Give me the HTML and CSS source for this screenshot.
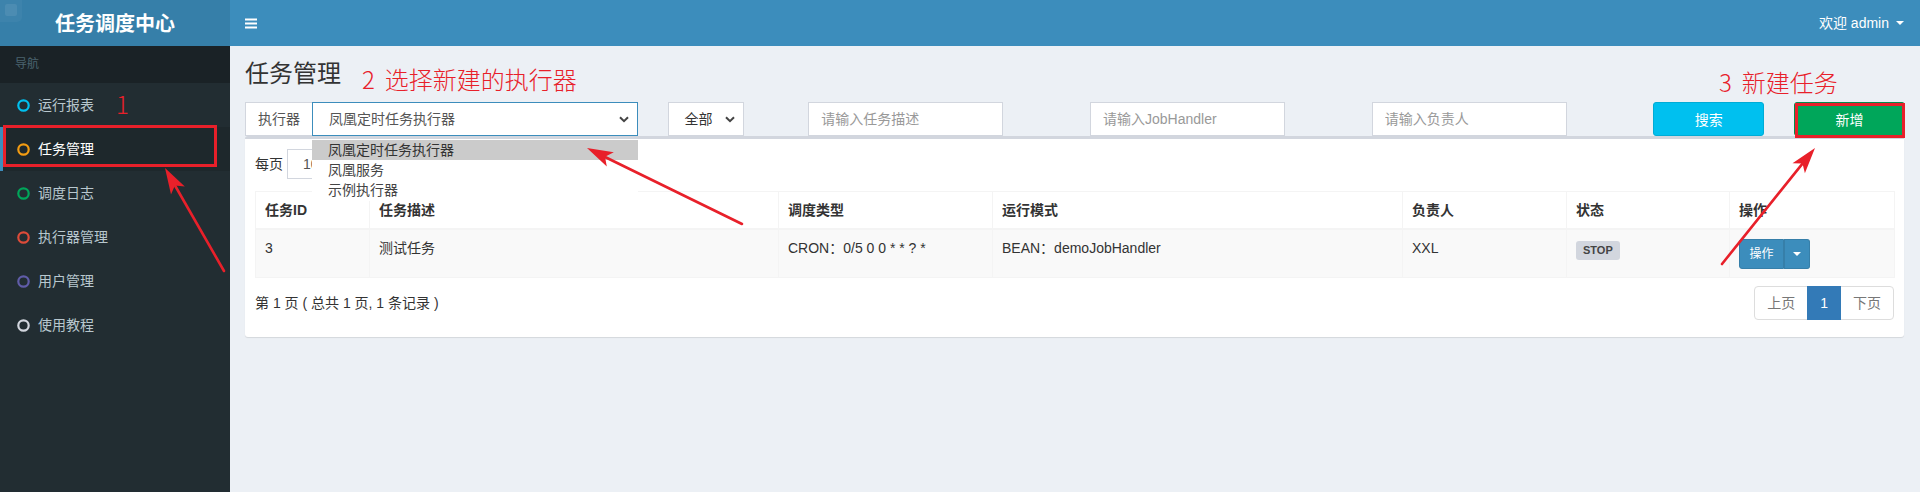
FILE: index.html
```html
<!DOCTYPE html>
<html lang="zh-CN">
<head>
<meta charset="utf-8">
<title>任务调度中心</title>
<link rel="stylesheet" href="styles.css">
</head>
<body>
<div class="app">
  <header class="topbar">
    <div class="logo">
      <span class="logo-mark"><span></span></span>
      <span class="logo-text">任务调度中心</span>
    </div>
    <nav class="navbar">
      <span class="toggle">
        <svg width="12" height="11" viewBox="0 0 12 11"><rect x="0" y="0.5" width="12" height="2" fill="#fff"/><rect x="0" y="4.5" width="12" height="2" fill="#fff"/><rect x="0" y="8.5" width="12" height="2" fill="#fff"/></svg>
      </span>
      <span class="user">欢迎 admin<span class="caret"></span></span>
    </nav>
  </header>
  <div class="main-wrap">
    <aside class="sidebar">
      <div class="nav-header">导航</div>
      <ul class="menu">
        <li><a><svg class="ico" viewBox="0 0 13 13"><circle cx="6.5" cy="6.5" r="5.2" stroke="#00c0ef"/></svg><span>运行报表</span></a></li>
        <li class="active"><a><svg class="ico" viewBox="0 0 13 13"><circle cx="6.5" cy="6.5" r="5.2" stroke="#f39c12"/></svg><span>任务管理</span></a></li>
        <li><a><svg class="ico" viewBox="0 0 13 13"><circle cx="6.5" cy="6.5" r="5.2" stroke="#00a65a"/></svg><span>调度日志</span></a></li>
        <li><a><svg class="ico" viewBox="0 0 13 13"><circle cx="6.5" cy="6.5" r="5.2" stroke="#dd4b39"/></svg><span>执行器管理</span></a></li>
        <li><a><svg class="ico" viewBox="0 0 13 13"><circle cx="6.5" cy="6.5" r="5.2" stroke="#605ca8"/></svg><span>用户管理</span></a></li>
        <li><a><svg class="ico" viewBox="0 0 13 13"><circle cx="6.5" cy="6.5" r="5.2" stroke="#d2d6de"/></svg><span>使用教程</span></a></li>
      </ul>
    </aside>
    <main class="content">
      <h1 class="page-title">任务管理</h1>
      <div class="filters">
        <div class="col col-3">
          <div class="input-group">
            <span class="addon">执行器</span>
            <div class="select select-focus">
              <span>凤凰定时任务执行器</span>
              <svg class="chev" width="10" height="7" viewBox="0 0 10 7"><path d="M1 1.2 L5 5.2 L9 1.2" fill="none" stroke="#444" stroke-width="2"/></svg>
            </div>
            <ul class="dropdown">
              <li class="hl">凤凰定时任务执行器</li>
              <li>凤凰服务</li>
              <li>示例执行器</li>
            </ul>
          </div>
        </div>
        <div class="col col-1">
          <div class="select select-small">
            <span>全部</span>
            <svg class="chev" width="10" height="7" viewBox="0 0 10 7"><path d="M1 1.2 L5 5.2 L9 1.2" fill="none" stroke="#444" stroke-width="2"/></svg>
          </div>
        </div>
        <div class="col col-2"><input class="text-input" type="text" placeholder="请输入任务描述"></div>
        <div class="col col-2"><input class="text-input" type="text" placeholder="请输入JobHandler"></div>
        <div class="col col-2"><input class="text-input" type="text" placeholder="请输入负责人"></div>
        <div class="col col-1"><button class="btn btn-search" type="button">搜索</button></div>
        <div class="col col-1"><button class="btn btn-add" type="button">新增</button></div>
      </div>
      <section class="box">
        <div class="length">
          <span>每页</span>
          <div class="select select-len"><span>10</span></div>
        </div>
        <table class="grid">
          <colgroup>
            <col class="c1"><col class="c2"><col class="c3"><col class="c4"><col class="c5"><col class="c6"><col class="c7">
          </colgroup>
          <thead>
            <tr><th>任务ID</th><th>任务描述</th><th>调度类型</th><th>运行模式</th><th>负责人</th><th>状态</th><th>操作</th></tr>
          </thead>
          <tbody>
            <tr>
              <td>3</td>
              <td>测试任务</td>
              <td>CRON：0/5 0 0 * * ? *</td>
              <td>BEAN：demoJobHandler</td>
              <td>XXL</td>
              <td><span class="label">STOP</span></td>
              <td>
                <span class="btn-group">
                  <span class="bg-main">操作</span><span class="bg-caret"><span class="caret-sm"></span></span>
                </span>
              </td>
            </tr>
          </tbody>
        </table>
        <div class="table-footer">
          <span class="info">第 1 页 ( 总共 1 页, 1 条记录 )</span>
          <ul class="pagination">
            <li class="disabled">上页</li>
            <li class="current">1</li>
            <li class="disabled">下页</li>
          </ul>
        </div>
      </section>
    </main>
  </div>

  <svg class="annotations" width="1920" height="492" viewBox="0 0 1920 492">
    <g fill="none" stroke="#e8202a" stroke-width="3">
      <rect x="4.5" y="126.5" width="211" height="39"/>
      <rect x="1796.5" y="104.5" width="107" height="32"/>
    </g>
    <g stroke="#e8202a" stroke-linecap="round">
      <line x1="224" y1="271" x2="175" y2="185.5" stroke-width="2.6"/>
      <line x1="742" y1="224" x2="605" y2="157" stroke-width="2.6"/>
      <line x1="1722" y1="264" x2="1802.5" y2="163.6" stroke-width="2.6"/>
    </g>
    <g fill="#e8202a">
      <polygon points="165,168 184.8,186.6 174.9,185.4 171,194.6"/>
      <polygon points="587,148 613.8,152.2 605,156.8 606.8,166.6"/>
      <polygon points="1815,148 1804.9,173.3 1802.5,163.6 1792.5,163.3"/>
    </g>
  </svg>
  <div class="note note-1">1</div>
  <div class="note note-2"><span class="num">2</span>选择新建的执行器</div>
  <div class="note note-3"><span class="num">3</span>新建任务</div>
</div>
</body>
</html>
```

FILE: styles.css
```css
* { box-sizing: border-box; }

html, body {
  margin: 0;
  padding: 0;
}

body {
  width: 1920px;
  height: 492px;
  overflow: hidden;
  font-family: "Liberation Sans", "Noto Sans CJK SC", sans-serif;
  font-size: 14px;
  line-height: 20px;
  color: #333;
  background: #ecf0f5;
}

ul { list-style: none; margin: 0; padding: 0; }

.app {
  position: relative;
  height: 492px;
  display: flex;
  flex-direction: column;
}

/* ---------- top bar ---------- */
.topbar {
  display: flex;
  height: 46px;
  flex: none;
}

.logo {
  position: relative;
  width: 230px;
  flex: none;
  background: #367fa9;
  color: #fff;
  display: flex;
  align-items: center;
  justify-content: center;
  font-family: "Noto Sans CJK SC", sans-serif;
  font-weight: 700;
  font-size: 20px;
  line-height: 24px;
}

.logo-mark {
  position: absolute;
  left: 0;
  top: 0;
  width: 22px;
  height: 22px;
  border-radius: 0 0 5px 0;
  background: rgba(255, 255, 255, 0.035);
}

.logo-mark span {
  position: absolute;
  left: 5px;
  top: 4px;
  width: 12px;
  height: 12px;
  border-radius: 2px;
  background: rgba(255, 255, 255, 0.08);
}

.navbar {
  flex: 1;
  background: #3c8dbc;
  display: flex;
  align-items: center;
  justify-content: space-between;
  padding: 0 16px 0 15px;
  color: #fff;
}

.toggle {
  display: flex;
  align-items: center;
  height: 12px;
}

.user {
  display: flex;
  align-items: center;
  font-size: 14px;
}

.caret {
  display: inline-block;
  width: 0;
  height: 0;
  margin-left: 7px;
  border-top: 4px solid #fff;
  border-left: 4px solid transparent;
  border-right: 4px solid transparent;
}

/* ---------- layout ---------- */
.main-wrap {
  flex: 1;
  display: flex;
  min-height: 0;
}

.sidebar {
  width: 230px;
  flex: none;
  background: #222d32;
}

.nav-header {
  background: #1a2226;
  color: #4b646f;
  font-size: 12px;
  line-height: 17px;
  padding: 10px 15px;
}

.menu li a {
  display: flex;
  align-items: center;
  padding: 12px 5px 12px 15px;
  color: #b8c7ce;
  font-size: 14px;
  line-height: 20px;
}

.menu li.active {
  background: #1e282c;
}

.menu li.active a {
  color: #fff;
  border-left: 3px solid #3c8dbc;
  padding-left: 12px;
}

.ico {
  width: 13px;
  height: 13px;
  margin-left: 2px;
  margin-right: 8px;
  fill: none;
  stroke-width: 2.2;
  flex: none;
}

.content {
  flex: 1;
  padding: 15px;
  min-width: 0;
}

.page-title {
  margin: 0;
  font-size: 24px;
  line-height: 26px;
  font-weight: 400;
  color: #333;
}

/* ---------- filters ---------- */
.filters {
  display: flex;
  margin: 15px -15px 0;
  height: 34px;
}

.col {
  padding: 0 15px;
  flex: none;
}

.col-1 { width: 8.3333%; }
.col-2 { width: 16.6667%; }
.col-3 { width: 25%; }

.input-group {
  position: relative;
  display: flex;
  height: 34px;
}

.addon {
  flex: none;
  padding: 6px 12px;
  border: 1px solid #d2d6de;
  border-right: 0;
  background: #fff;
  color: #555;
  line-height: 20px;
}

.select {
  display: flex;
  align-items: center;
  justify-content: space-between;
  height: 34px;
  border: 1px solid #d2d6de;
  background: #fff;
  color: #555;
  padding: 6px 8px 6px 16px;
}

.select-focus {
  flex: 1;
  border-color: #3c8dbc;
}

.select-small {
  width: 76px;
  color: #333;
}

.chev { flex: none; }

.dropdown {
  position: absolute;
  left: 67px;
  right: 0;
  top: 38px;
  background: #fff;
  color: #444;
  z-index: 5;
}

.dropdown li {
  height: 20px;
  line-height: 20px;
  padding-left: 16px;
}

.dropdown li:last-child { height: 21px; }

.dropdown li.hl {
  background: #cbcbcb;
  color: #333;
}

.text-input {
  width: 195px;
  height: 34px;
  border: 1px solid #d2d6de;
  padding: 6px 12px;
  font-family: inherit;
  font-size: 14px;
  color: #555;
  background: #fff;
  outline: none;
  border-radius: 0;
}

.text-input::placeholder { color: #999; }

.btn {
  display: block;
  width: 100%;
  height: 34px;
  border-radius: 3px;
  font-family: inherit;
  font-size: 14px;
  color: #fff;
  padding: 6px 12px;
  cursor: pointer;
}

.btn-search {
  background: #00c0ef;
  border: 1px solid #00acd6;
}

.btn-add {
  background: #00a65a;
  border: 1px solid #008d4c;
}

/* ---------- box ---------- */
.box {
  background: #fff;
  border-top: 3px solid #d2d6de;
  border-radius: 3px;
  box-shadow: 0 1px 1px rgba(0, 0, 0, 0.1);
  padding: 10px;
  width: 1659px;
}

.length {
  display: flex;
  align-items: center;
  height: 30px;
}

.select-len {
  width: 75px;
  height: 30px;
  margin-left: 4px;
  padding: 4px 15px;
  color: #555;
}

.grid {
  width: 1639px;
  margin-top: 12px;
  border-collapse: collapse;
  table-layout: fixed;
  border: 1px solid #f4f4f4;
}

.c1 { width: 114px; }
.c2 { width: 409px; }
.c3 { width: 214px; }
.c4 { width: 410px; }
.c5 { width: 164px; }
.c6 { width: 163px; }
.c7 { width: 165px; }

.grid th,
.grid td {
  padding: 8px 9px;
  line-height: 20px;
  text-align: left;
  vertical-align: top;
  border: 1px solid #f4f4f4;
}

.grid th {
  font-weight: 700;
  border-bottom-width: 2px;
  color: #333;
}

.grid tbody tr { background: #f9f9f9; }

.grid td { color: #333; }

.label {
  display: inline-block;
  background: #d2d6de;
  color: #444;
  font-size: 11px;
  font-weight: 700;
  line-height: 11px;
  padding: 4px 7px;
  border-radius: 3px;
  margin-top: 3px;
}

.btn-group {
  display: inline-flex;
  height: 30px;
  vertical-align: top;
  margin-top: 1px;
}

.bg-main,
.bg-caret {
  display: flex;
  align-items: center;
  justify-content: center;
  background: #3c8dbc;
  border: 1px solid #367fa9;
  color: #fff;
  font-size: 12px;
}

.bg-main {
  width: 45px;
  border-radius: 3px 0 0 3px;
}

.bg-caret {
  width: 26px;
  border-left: 0;
  border-radius: 0 3px 3px 0;
  box-shadow: inset 1px 0 0 #367fa9;
}

.caret-sm {
  width: 0;
  height: 0;
  border-top: 4px solid #fff;
  border-left: 4px solid transparent;
  border-right: 4px solid transparent;
}

.table-footer {
  display: flex;
  align-items: center;
  justify-content: space-between;
  margin-top: 8px;
  margin-bottom: 7px;
}

.pagination {
  display: flex;
}

.pagination li {
  padding: 6px 12px;
  line-height: 20px;
  border: 1px solid #ddd;
  margin-left: -1px;
  background: #fff;
  color: #777;
}

.pagination li:first-child {
  border-radius: 4px 0 0 4px;
}

.pagination li:last-child {
  border-radius: 0 4px 4px 0;
}

.pagination li.current {
  background: #337ab7;
  border-color: #337ab7;
  color: #fff;
  position: relative;
  z-index: 1;
}

/* ---------- annotations overlay ---------- */
.annotations {
  position: absolute;
  left: 0;
  top: 0;
  pointer-events: none;
  z-index: 10;
}

.note {
  position: absolute;
  z-index: 11;
  color: #e8202a;
  font-family: "Noto Sans CJK SC", sans-serif;
  font-weight: 300;
  font-size: 24px;
  line-height: 24px;
  white-space: nowrap;
}

.note .num { margin-right: 10px; }

.note-1 { left: 116px; top: 92px; }
.note-2 { left: 362px; top: 67px; }
.note-3 { left: 1719px; top: 70px; }
```
